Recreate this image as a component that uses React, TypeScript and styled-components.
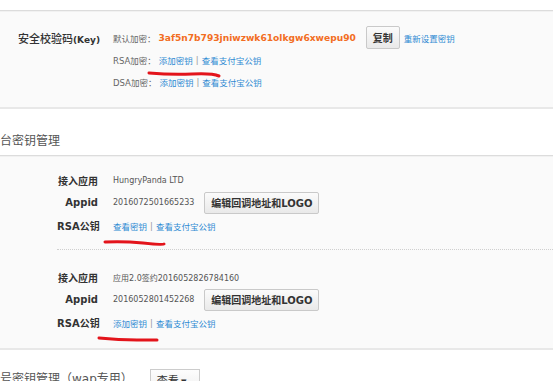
import React from "react";
import styled, { createGlobalStyle } from "styled-components";

const Global = createGlobalStyle`
  html, body { margin: 0; padding: 0; background: #fff; }
  body { font-family: "DejaVu Sans", "Noto Sans CJK SC", sans-serif; color: #333; }
`;

const Page = styled.div`
  width: 553px;
  height: 381px;
  overflow: hidden;
  background: #fff;
`;

const TopGap = styled.div`
  height: 10px;
`;

const Panel = styled.section<{ $pt: number; $pb: number }>`
  background: #fafafa;
  border-top: 1px solid #dcdcdc;
  box-shadow: inset 0 1px 0 #f1f1f1;
  border-bottom: 2px solid #e8e8e8;
  padding: ${(p) => p.$pt}px 0 ${(p) => p.$pb}px;
`;

const KeyGrid = styled.div`
  display: grid;
  grid-template-columns: 113px 1fr;
  grid-auto-rows: 22px;
  grid-template-rows: 23px;
  align-items: center;
`;

const KeyLabel = styled.div`
  padding-left: 18px;
  font-size: 11px;
  color: #333;
  white-space: nowrap;
  font-weight: 500;
`;

const KeyLabelLatin = styled.span`
  font-weight: bold;
  font-size: 9px;
`;

const Line = styled.div`
  display: flex;
  align-items: center;
  white-space: nowrap;
`;

const SmallLabel = styled.span`
  font-size: 8.5px;
  color: #666;
  margin-right: 3px;
`;

const KeyValue = styled.span`
  font-weight: bold;
  font-size: 9.1px;
  color: #f26d22;
  margin-right: 10px;
`;

const Button = styled.button<{ $w: number; $h: number }>`
  width: ${(p) => p.$w}px;
  height: ${(p) => p.$h}px;
  padding: 0;
  border: 1px solid #c9c9c9;
  border-radius: 2px;
  background: linear-gradient(#fbfbfb, #e9e9e9);
  font-family: "DejaVu Sans", "Noto Sans CJK SC", sans-serif;
  font-weight: bold;
  font-size: 10px;
  color: #333;
  display: inline-flex;
  align-items: center;
  justify-content: center;
  white-space: nowrap;
`;

const Links = styled.span`
  position: relative;
  display: inline-flex;
  align-items: center;
  font-size: 8.5px;
  white-space: nowrap;
`;

const Link = styled.a`
  color: #2f8ad3;
  text-decoration: none;
  cursor: pointer;
`;

const Sep = styled.span`
  color: #999;
  margin: 0 3px;
`;

const ResetLink = styled(Link)`
  font-size: 8.5px;
  margin-left: 4px;
`;

const Scribble = styled.svg<{ $l: number; $t: number }>`
  position: absolute;
  left: ${(p) => p.$l}px;
  top: ${(p) => p.$t}px;
  overflow: visible;
  pointer-events: none;
`;

const SectionHead = styled.div<{ $h: number; $pt: number }>`
  height: ${(p) => p.$h}px;
  padding-top: ${(p) => p.$pt}px;
  box-sizing: border-box;
  display: flex;
  align-items: flex-start;
  gap: 17px;
`;

const SectionTitle = styled.h2`
  margin: 0;
  font-weight: normal;
  font-size: 12px;
  line-height: 16px;
  color: #555;
  white-space: nowrap;
`;

const AppBlock = styled.div<{ $pt: number; $pb: number; $dotted?: boolean }>`
  margin-left: ${(p) => (p.$dotted ? 57 : 0)}px;
  border-top: ${(p) => (p.$dotted ? "1px dotted #cfcfcf" : "none")};
  padding: ${(p) => p.$pt}px 0 ${(p) => p.$pb}px ${(p) => (p.$dotted ? 0 : 57)}px;
  display: grid;
  grid-template-columns: 41px 1fr;
  grid-template-rows: 22px 23px 23px;
  column-gap: 15px;
  align-items: center;
`;

const AppLabel = styled.div`
  text-align: right;
  font-weight: bold;
  font-size: 10px;
  color: #333;
  white-space: nowrap;
`;

const AppValue = styled.span`
  font-size: 8px;
  color: #555;
  margin-right: 10px;
`;

const SelectButton = styled.button`
  height: 22px;
  width: 50px;
  padding: 0 0 0 6px;
  text-align: left;
  border: 1px solid #ccc;
  background: linear-gradient(#fdfdfd, #f0f0f0);
  font-family: "Noto Sans CJK SC", sans-serif;
  font-size: 11px;
  color: #333;
  margin-top: -2px;
`;

const Mark = ({ l, t, w, d }: { l: number; t: number; w: number; d: string }) => (
  <Scribble $l={l} $t={t} width={w} height={7} viewBox={`0 0 ${w} 7`}>
    <path d={d} stroke="#e3141b" strokeWidth={3} fill="none" strokeLinecap="round" />
  </Scribble>
);

type App = {
  name: string;
  appid: string;
  first: string;
  mark: { l: number; t: number; w: number; d: string };
};

const apps: App[] = [
  {
    name: "HungryPanda LTD",
    appid: "2016072501665233",
    first: "查看密钥",
    mark: { l: -10, t: 19, w: 63, d: "M2,3 Q20,2 40,4 T61,5" },
  },
  {
    name: "应用2.0签约2016052826784160",
    appid: "2016052801452268",
    first: "添加密钥",
    mark: { l: -16, t: 19, w: 62, d: "M2,2 Q22,4 40,4 T60,4" },
  },
];

export default function AppPage() {
  return (
    <Page>
      <Global />
      <TopGap />
      <Panel $pt={15} $pb={14}>
        <KeyGrid>
          <KeyLabel>
            安全校验码<KeyLabelLatin>(Key)</KeyLabelLatin>
          </KeyLabel>
          <Line>
            <SmallLabel>默认加密：</SmallLabel>
            <KeyValue>3af5n7b793jniwzwk61olkgw6xwepu90</KeyValue>
            <Button $w={34} $h={23}>复制</Button>
            <ResetLink>重新设置密钥</ResetLink>
          </Line>
          <div />
          <Line>
            <SmallLabel>RSA加密：</SmallLabel>
            <Links>
              <Link>添加密钥</Link>
              <Sep>|</Sep>
              <Link>查看支付宝公钥</Link>
              <Mark l={-12} t={17} w={74} d="M2,2 Q25,4 45,3 T72,5" />
            </Links>
          </Line>
          <div />
          <Line>
            <SmallLabel>DSA加密：</SmallLabel>
            <Links>
              <Link>添加密钥</Link>
              <Sep>|</Sep>
              <Link>查看支付宝公钥</Link>
            </Links>
          </Line>
        </KeyGrid>
      </Panel>
      <SectionHead $h={46} $pt={24}>
        <SectionTitle>台密钥管理</SectionTitle>
      </SectionHead>
      <Panel $pt={13} $pb={0}>
        {apps.map((a, i) => (
          <AppBlock key={a.appid} $pt={i === 0 ? 0 : 16} $pb={i === 0 ? 12 : 14} $dotted={i > 0}>
            <AppLabel>接入应用</AppLabel>
            <Line>
              <AppValue>{a.name}</AppValue>
            </Line>
            <AppLabel>Appid</AppLabel>
            <Line>
              <AppValue>{a.appid}</AppValue>
              <Button $w={115} $h={22}>编辑回调地址和LOGO</Button>
            </Line>
            <AppLabel>RSA公钥</AppLabel>
            <Line>
              <Links>
                <Link>{a.first}</Link>
                <Sep>|</Sep>
                <Link>查看支付宝公钥</Link>
                <Mark {...a.mark} />
              </Links>
            </Line>
          </AppBlock>
        ))}
      </Panel>
      <SectionHead $h={40} $pt={21}>
        <SectionTitle>号密钥管理（wap专用）</SectionTitle>
        <SelectButton>查看 ▾</SelectButton>
      </SectionHead>
    </Page>
  );
}
